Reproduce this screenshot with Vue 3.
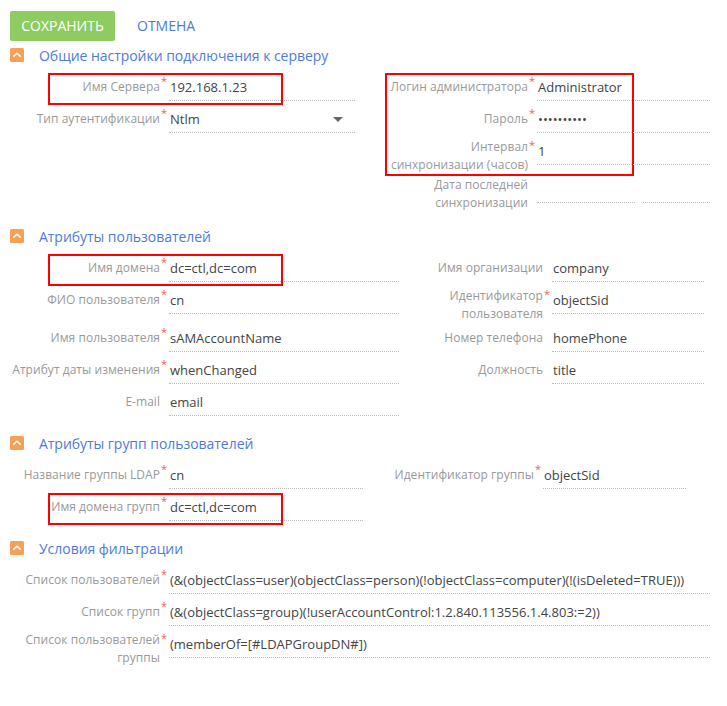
<script setup>
const sections = [
  {
    title: 'Общие настройки подключения к серверу',
    layout: 'server',
    cells: [
      { label: 'Имя Сервера', value: '192.168.1.23', required: true, mark: 'single' },
      { label: 'Логин администратора', value: 'Administrator', required: true, mark: 'group' },
      { label: 'Тип аутентификации', value: 'Ntlm', required: true, select: true },
      { label: 'Пароль', value: '••••••••••', required: true },
      null,
      { label: 'Интервал\nсинхронизации (часов)', value: '1', required: true },
      null,
      { label: 'Дата последней\nсинхронизации', value: '', split: true },
    ],
  },
  {
    title: 'Атрибуты пользователей',
    layout: 'users',
    cells: [
      { label: 'Имя домена', value: 'dc=ctl,dc=com', required: true, mark: 'single' },
      { label: 'Имя организации', value: 'company' },
      { label: 'ФИО пользователя', value: 'cn', required: true },
      { label: 'Идентификатор\nпользователя', value: 'objectSid', required: true },
      { label: 'Имя пользователя', value: 'sAMAccountName', required: true },
      { label: 'Номер телефона', value: 'homePhone' },
      { label: 'Атрибут даты изменения', value: 'whenChanged', required: true },
      { label: 'Должность', value: 'title' },
      { label: 'E-mail', value: 'email' },
    ],
  },
  {
    title: 'Атрибуты групп пользователей',
    layout: 'groups',
    cells: [
      { label: 'Название группы LDAP', value: 'cn', required: true },
      { label: 'Идентификатор группы', value: 'objectSid', required: true },
      { label: 'Имя домена групп', value: 'dc=ctl,dc=com', required: true, mark: 'single' },
    ],
  },
  {
    title: 'Условия фильтрации',
    layout: 'filters',
    cells: [
      { label: 'Список пользователей', value: '(&(objectClass=user)(objectClass=person)(!objectClass=computer)(!(isDeleted=TRUE)))', required: true },
      { label: 'Список групп', value: '(&(objectClass=group)(!userAccountControl:1.2.840.113556.1.4.803:=2))', required: true },
      { label: 'Список пользователей\nгруппы', value: '(memberOf=[#LDAPGroupDN#])', required: true },
    ],
  },
]
</script>

<template>
  <main class="page">
    <div class="toolbar">
      <button class="save">СОХРАНИТЬ</button>
      <button class="cancel">ОТМЕНА</button>
    </div>
    <section v-for="s in sections" :key="s.title" class="section">
      <header class="head">
        <svg class="toggle" width="14" height="14" viewBox="0 0 14 14">
          <rect width="14" height="14" rx="1.5" fill="#f6a057" />
          <path d="M3.3 8.6 L7 5.2 L10.7 8.6" fill="none" stroke="#fff" stroke-width="1.5" />
        </svg>
        <h2 class="title">{{ s.title }}</h2>
      </header>
      <div class="fields" :class="s.layout">
        <div v-for="(c, i) in s.cells" :key="i" class="cell">
          <template v-if="c">
            <div class="label">{{ c.label }}</div>
            <div class="star">{{ c.required ? '*' : '' }}</div>
            <div v-if="c.split" class="split"><div class="value"></div><div class="value"></div></div>
            <div v-else class="value">
              <span>{{ c.value }}</span>
              <svg v-if="c.select" class="arrow" width="10" height="5" viewBox="0 0 10 5"><path d="M0 0H10L5 5Z" fill="#666" /></svg>
            </div>
            <div v-if="c.mark" class="mark" :class="c.mark"></div>
          </template>
        </div>
      </div>
    </section>
  </main>
</template>

<style>
body { margin: 0; background: #fff; }
</style>

<style scoped>
.page {
  box-sizing: border-box;
  width: 727px;
  height: 706px;
  padding: 11px 0 0 10px;
  font-family: "Open Sans", "Noto Sans", sans-serif;
  font-size: 13px;
  color: #444;
  overflow: hidden;
}
.toolbar { display: flex; height: 30px; margin-bottom: 7px; }
button {
  border: 0;
  padding: 0;
  background: none;
  font: 14px/30px "Open Sans", sans-serif;
  white-space: nowrap;
}
.save { width: 105px; background: #8ecb60; color: #fff; border-radius: 2px; }
.cancel { margin-left: 22px; color: #4e7bd9; }
.section { margin-bottom: 17px; }
.head { display: flex; height: 26px; align-items: flex-start; }
.toggle { flex: none; display: block; }
.title {
  margin: -2px 0 0 15px;
  font-size: 14px;
  font-weight: 400;
  line-height: 20px;
  letter-spacing: -0.04px;
  color: #4e7bd9;
  white-space: nowrap;
}
.fields { display: grid; row-gap: 2px; justify-content: start; }
.server { grid-template-columns: 345px 355px; }
.users { grid-template-columns: 389px 305px; }
.groups { grid-template-columns: 353px 323px; }
.filters { grid-template-columns: 700px; }
.cell { position: relative; display: flex; align-items: flex-start; min-height: 30px; }
.label {
  flex: none;
  box-sizing: border-box;
  display: flex;
  align-items: center;
  justify-content: flex-end;
  width: 150px;
  min-height: 26px;
  font-size: 12px;
  line-height: 18px;
  letter-spacing: 0.04px;
  text-align: right;
  white-space: pre;
  color: #999;
}
.server .cell:nth-child(even) .label { width: 173px; }
.users .cell:nth-child(even) .label { width: 144px; }
.groups .cell:nth-child(even) .label { width: 171px; }
.star { flex: none; width: 9px; padding-left: 1px; box-sizing: border-box; color: #f4604f; font-size: 11px; line-height: 13px; height: 18px; }
.value {
  flex: 1;
  min-width: 0;
  box-sizing: border-box;
  display: flex;
  align-items: center;
  height: 27px;
  padding-left: 1px;
  border-bottom: 1px dotted #bbb;
  white-space: nowrap;
}
.arrow { margin-left: auto; margin-right: 12px; }
.split { flex: 1; display: grid; grid-template-columns: 98px 67px; column-gap: 8px; }
.mark { position: absolute; top: -1px; box-sizing: border-box; border: 2px solid #f00; }
.single { left: 38px; width: 235px; height: 32px; }
.group { left: 30px; width: 249px; height: 103px; }
</style>
